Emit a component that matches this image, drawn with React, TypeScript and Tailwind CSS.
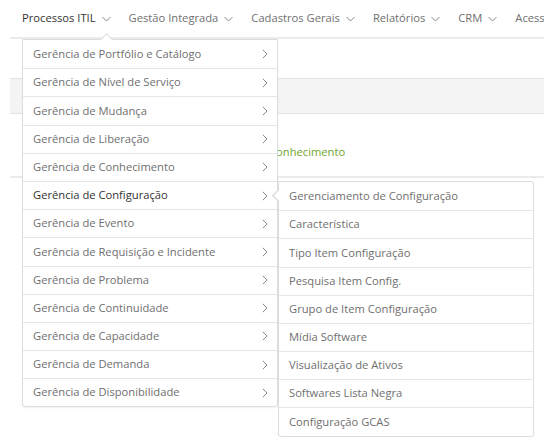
import React from "react";

const navItems = ["Processos ITIL", "Gestão Integrada", "Cadastros Gerais", "Relatórios", "CRM", "Acesso"];

const mainItems = [
  "Gerência de Portfólio e Catálogo",
  "Gerência de Nível de Serviço",
  "Gerência de Mudança",
  "Gerência de Liberação",
  "Gerência de Conhecimento",
  "Gerência de Configuração",
  "Gerência de Evento",
  "Gerência de Requisição e Incidente",
  "Gerência de Problema",
  "Gerência de Continuidade",
  "Gerência de Capacidade",
  "Gerência de Demanda",
  "Gerência de Disponibilidade",
];

const subItems = [
  "Gerenciamento de Configuração",
  "Característica",
  "Tipo Item Configuração",
  "Pesquisa Item Config.",
  "Grupo de Item Configuração",
  "Mídia Software",
  "Visualização de Ativos",
  "Softwares Lista Negra",
  "Configuração GCAS",
];

const Down = () => (
  <svg width="9" height="6" viewBox="0 0 9 6" className="ml-[6px] mt-[2px]">
    <path d="M0.5 1 L4.5 5 L8.5 1" fill="none" stroke="#888" strokeWidth="1" />
  </svg>
);

const Right = () => (
  <svg width="6" height="10" viewBox="0 0 6 10">
    <path d="M0.8 0.8 L5 5 L0.8 9.2" fill="none" stroke="#888" strokeWidth="1" />
  </svg>
);

export default function App() {
  return (
    <div className="relative w-[559px] h-[443px] overflow-hidden bg-white font-['Open_Sans',sans-serif] text-[11.2px]">
      {/* top nav */}
      <div className="mx-[10px] w-[534px] h-[39px] overflow-hidden border-b-2 border-[#ebebeb] flex items-center pl-[12px] gap-[18px] whitespace-nowrap">
        {navItems.map((n, i) => (
          <div key={n} className={`flex items-center shrink-0 ${i === 0 ? "text-[#333]" : "text-[#6f6f6f]"}`}>
            <span>{n}</span>
            {i < navItems.length - 1 && <Down />}
          </div>
        ))}
      </div>

      {/* page content behind the menus */}
      <div className="mx-[10px] w-[534px]">
        <div className="h-[39px]" />
        <div className="h-[36px] bg-[#f4f4f4] border-y border-[#e2e2e2]" />
        <div className="h-[62px] flex items-center pl-[215px] pt-[15px] text-[#6fa52d]">Base de Conhecimento</div>
        <div className="h-[2px] bg-[#ebebeb]" />
      </div>

      {/* dropdown */}
      <div className="absolute left-[22px] top-[39px] w-[256px] bg-white border border-[#dcdcdc] rounded-b-[3px] shadow-[0_1px_2px_rgba(0,0,0,0.06)]">
        <div className="absolute left-[79px] top-[-5px] w-[9px] h-[9px] rotate-45 bg-white border-l border-t border-[#dcdcdc]" />
        {mainItems.map((m, i) => {
          const active = i === 5;
          return (
            <div
              key={m}
              className={`relative h-[28.2px] flex items-center justify-between pl-[10px] pr-[9px] ${i > 0 ? "border-t border-[#e6e6e6]" : ""} ${active ? "text-[#333]" : "text-[#6f6f6f]"}`}
            >
              <span>{m}</span>
              <Right />
              {active && (
                <div className="absolute left-[255px] top-[-1px] w-[256px] bg-white border border-[#dcdcdc] rounded-b-[3px] rounded-tr-[3px] z-10">
                  <div className="absolute left-[-5px] top-[9px] w-[9px] h-[9px] rotate-45 bg-white border-l border-b border-[#cfcfcf]" />
                  {subItems.map((s, j) => (
                    <div
                      key={s}
                      className={`relative h-[28.2px] flex items-center pl-[10px] text-[#6f6f6f] ${j > 0 ? "border-t border-[#e6e6e6]" : ""}`}
                    >
                      {s}
                    </div>
                  ))}
                </div>
              )}
            </div>
          );
        })}
      </div>
    </div>
  );
}
